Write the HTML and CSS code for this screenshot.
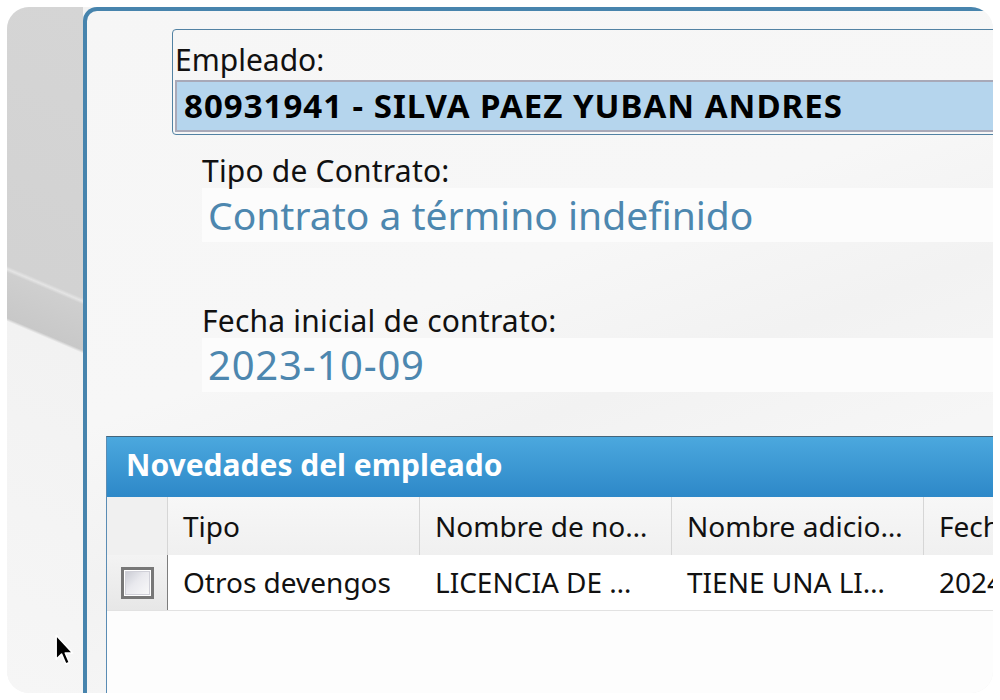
FILE: index.html
```html
<!DOCTYPE html>
<html lang="es">
<head>
    <meta charset="UTF-8">
    <meta name="viewport" content="width=device-width, initial-scale=1.0">
    <title>Novedades del empleado</title>
    <link rel="stylesheet" href="styles.css">
</head>
<body>
    <div class="screen">
        <div class="desk"></div>

        <div class="window">
            <!-- empleado seleccionado -->
            <div class="emp">
                <div class="emp-label">Empleado:</div>
                <div class="emp-value">80931941 - SILVA PAEZ YUBAN ANDRES</div>
            </div>

            <div class="field">
                <div class="field-label">Tipo de Contrato:</div>
                <div class="field-value">Contrato a término indefinido</div>
            </div>

            <div class="field field-fecha">
                <div class="field-label">Fecha inicial de contrato:</div>
                <div class="field-value date">2023-10-09</div>
            </div>

            <!-- grilla de novedades -->
            <div class="grid">
                <div class="grid-title">Novedades del empleado</div>
                <div class="grid-head">
                    <div class="cell cell-check"></div>
                    <div class="cell">Tipo</div>
                    <div class="cell">Nombre de no…</div>
                    <div class="cell">Nombre adicio…</div>
                    <div class="cell">Fecha</div>
                </div>
                <div class="grid-row">
                    <div class="cell cell-check"><span class="check"></span></div>
                    <div class="cell">Otros devengos</div>
                    <div class="cell">LICENCIA DE …</div>
                    <div class="cell">TIENE UNA LI…</div>
                    <div class="cell">2024-01-15</div>
                </div>
                <div class="grid-empty"></div>
            </div>
        </div>

        <svg class="cursor" width="20" height="32" viewBox="0 0 17 27">
            <path d="M1 1 L1 21.5 L5.6 17 L9.2 25.4 L12.2 24.1 L8.7 16 L15 16 Z" fill="#000" stroke="#fff" stroke-width="1.3" stroke-linejoin="round"/>
        </svg>
    </div>
</body>
</html>
```

FILE: styles.css
```css
* {
    box-sizing: border-box;
}
body {
    margin: 0;
    background: #fff;
    font-family: 'Noto Sans', 'Open Sans', sans-serif;
    color: #111;
}
.screen {
    position: relative;
    display: flex;
    width: 986px;
    height: 686px;
    margin: 7px;
    border-radius: 22px;
    overflow: hidden;
    background: #f3f3f3;
}
.desk {
    flex: 0 0 76px;
    background: linear-gradient(203deg, #d5d5d5 0, #d2d2d2 268px, #e4e4e4 271px, #cfcfcf 274px, #c8c8c8 316px, #f2f2f2 319px, #f6f6f6 100%);
}
.window {
    flex: 0 0 960px;
    border-left: 4px solid #4784ad;
    border-top: 4px solid #4784ad;
    border-radius: 14px 0 0 0;
    background: linear-gradient(160deg, #f6f6f6 0, #f7f7f7 40%, #f2f2f2 55%, #f6f6f6 70%);
}

/* empleado */
.emp {
    width: 900px;
    margin: 18px 0 0 85px;
    padding: 12px 0 2px 2px;
    border: 1px solid #5282a3;
    border-radius: 4px;
}
.emp-label {
    font-size: 30px;
    line-height: 36px;
    margin-bottom: 2px;
}
.emp-value {
    height: 52px;
    padding-left: 7px;
    border: 2px solid #a8a9b8;
    background: #b5d5ed;
    font-size: 33px;
    font-weight: bold;
    letter-spacing: 1px;
    line-height: 47px;
    color: #000;
    white-space: nowrap;
}

/* campos */
.field {
    margin: 19px 0 0 115px;
}
.field-fecha {
    margin-top: 62px;
}
.field-label {
    font-size: 30px;
    letter-spacing: 0.2px;
    line-height: 34px;
}
.field-value {
    width: 800px;
    height: 54px;
    padding-left: 6px;
    background: #fcfcfc;
    font-size: 39px;
    line-height: 54px;
    color: #4d87af;
    white-space: nowrap;
}
.field-value.date {
    font-size: 40px;
    letter-spacing: 0.8px;
}

/* grilla */
.grid {
    width: 900px;
    height: 300px;
    margin: 44px 0 0 19px;
    border-left: 1px solid #5a8cb4;
    border-top: 1px solid #44657b;
    background: #fdfdfd;
}
.grid-title {
    height: 60px;
    padding-left: 19px;
    background: linear-gradient(#4ba8de, #2d88c8);
    color: #fff;
    font-size: 30px;
    font-weight: bold;
    line-height: 56px;
}
.grid-head,
.grid-row {
    display: flex;
    font-size: 28px;
    white-space: nowrap;
}
.grid-head {
    height: 58px;
    line-height: 58px;
    background: linear-gradient(#f7f7f7, #f0f0f0);
}
.grid-row {
    height: 56px;
    line-height: 55px;
    background: #fff;
    border-bottom: 1px solid #e2e2e2;
}
.cell {
    flex: 0 0 252px;
    padding-left: 15px;
    border-right: 1px solid #d6d6d6;
    overflow: hidden;
}
.grid-row .cell {
    border-right-color: transparent;
}
.cell-check {
    flex: 0 0 61px;
    padding: 0;
}
.grid-head .cell-check {
    background: #f0f0f0;
}
.grid-row .cell-check {
    display: flex;
    align-items: center;
    justify-content: center;
    border-right-color: #7d7d7d;
    background: linear-gradient(#f3f3f3, #e7e7e7);
}
.check {
    width: 33px;
    height: 32px;
    border: 3px solid #777;
    background: linear-gradient(135deg, #c4c6cf 0, #e9e9ee 45%, #fbfbfb 100%);
    box-shadow: inset 0 0 0 1px #fff, inset 0 0 0 2px #d0d0d8;
}

.cursor {
    position: absolute;
    left: 48px;
    top: 627px;
}
```
